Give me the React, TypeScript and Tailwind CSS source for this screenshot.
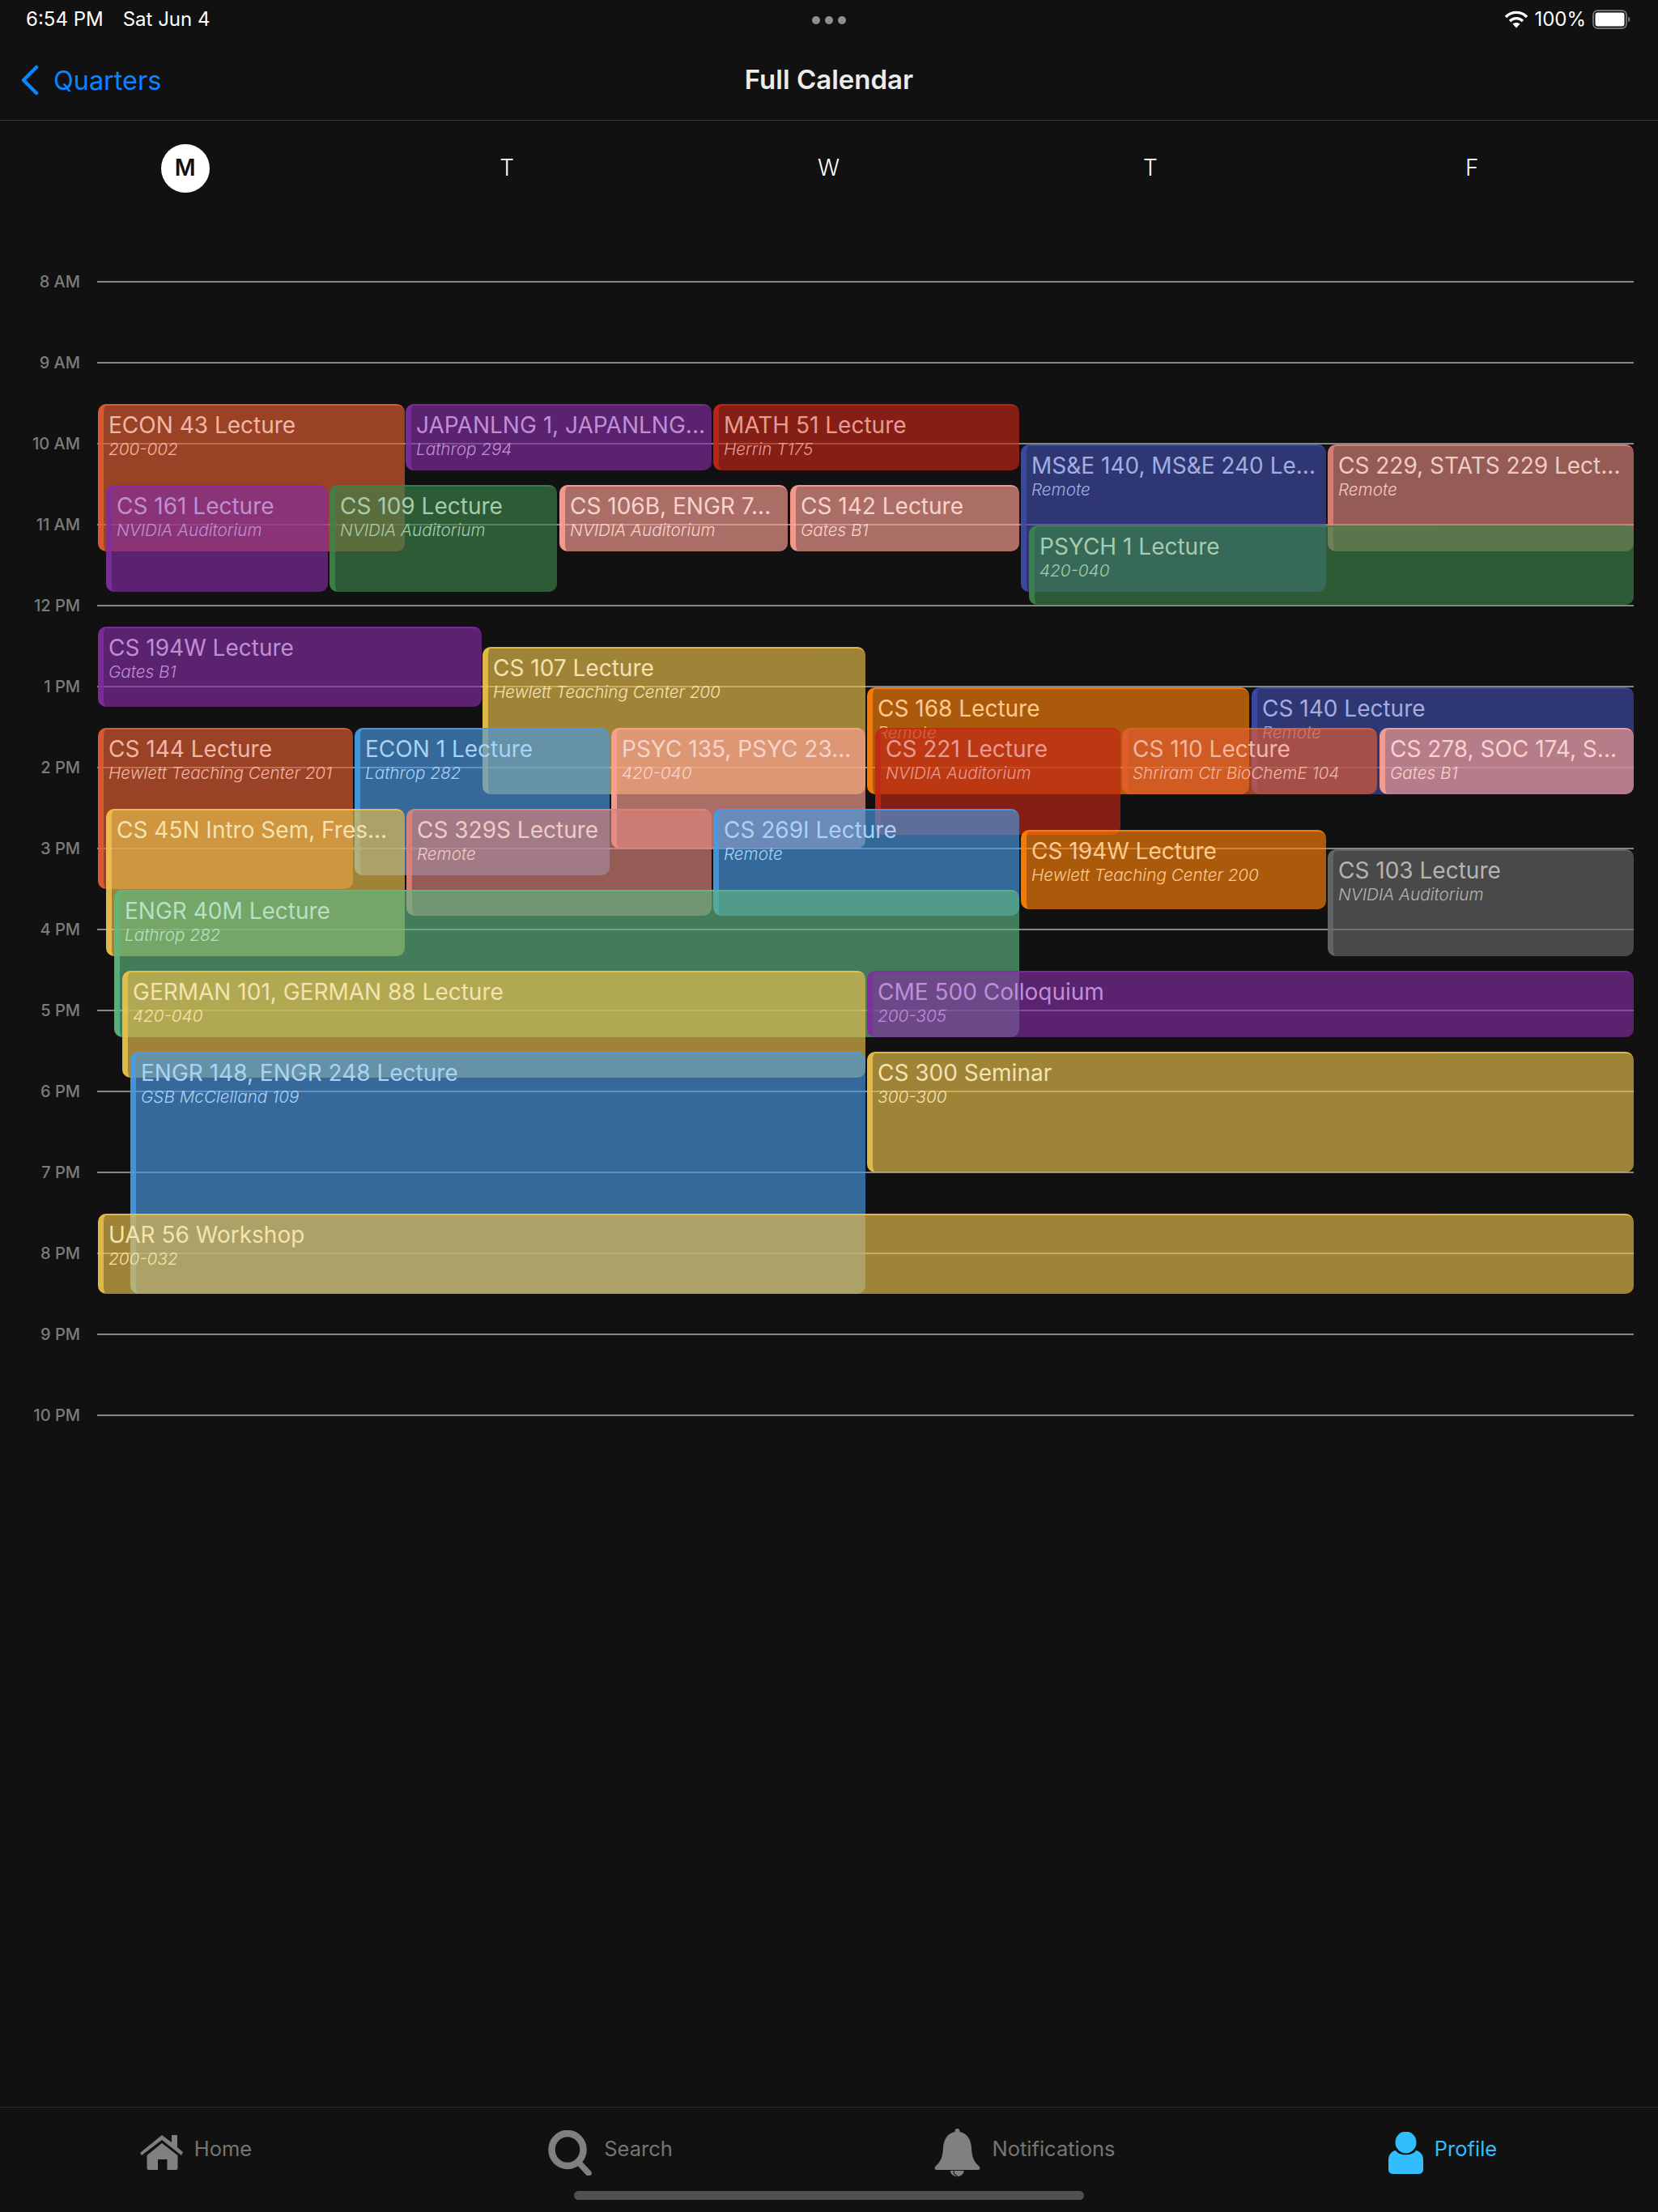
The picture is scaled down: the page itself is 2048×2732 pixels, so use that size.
import type { ReactNode } from 'react';

const tones = {
    rust: { card: 'bg-[#e45e33]/65 border-[#e45e33]/85', text: 'text-[#f2b7a3]' },
    purple: { card: 'bg-[#832da3]/65 border-[#832da3]/85', text: 'text-[#bf8fd4]' },
    red: { card: 'bg-[#c52717]/65 border-[#c52717]/85', text: 'text-[#e79c93]' },
    green: { card: 'bg-[#3c844a]/65 border-[#3c844a]/85', text: 'text-[#a6cbae]' },
    mint: { card: 'bg-[#5fb781]/65 border-[#5fb781]/85', text: 'text-[#b6e1c4]' },
    salmon: { card: 'bg-[#ffa195]/65 border-[#ffa195]/85', text: 'text-[#f8d3ce]' },
    rose: { card: 'bg-[#dd847b]/65 border-[#dd847b]/85', text: 'text-[#f0cbc6]' },
    navy: { card: 'bg-[#3f4dab]/65 border-[#3f4dab]/85', text: 'text-[#a3addf]' },
    gold: { card: 'bg-[#edc24d]/65 border-[#edc24d]/85', text: 'text-[#f4e3b0]' },
    orange: { card: 'bg-[#ff8108]/65 border-[#ff8108]/85', text: 'text-[#fdca90]' },
    blue: { card: 'bg-[#489ae4]/65 border-[#489ae4]/85', text: 'text-[#a9d2f4]' },
    gray: { card: 'bg-[#696969]/65 border-[#696969]/85', text: 'text-[#b4b4b4]' },
};

type CalendarEvent = {
    title: string;
    room?: string;
    tone: keyof typeof tones;
    x: number;
    y: number;
    w: number;
    h: number;
};

// x / y are offsets inside the calendar body, 100px = 1 hour
const events: CalendarEvent[] = [
    { title: 'ECON 43 Lecture', room: '200-002', tone: 'rust', x: 121, y: 201, w: 379, h: 182 },
    { title: 'JAPANLNG 1, JAPANLNG...', room: 'Lathrop 294', tone: 'purple', x: 501, y: 201, w: 378, h: 82 },
    { title: 'MATH 51 Lecture', room: 'Herrin T175', tone: 'red', x: 881, y: 201, w: 378, h: 82 },
    { title: 'MS&E 140, MS&E 240 Le...', room: 'Remote', tone: 'navy', x: 1261, y: 251, w: 377, h: 182 },
    { title: 'CS 229, STATS 229 Lect...', room: 'Remote', tone: 'rose', x: 1640, y: 251, w: 378, h: 132 },
    { title: 'CS 161 Lecture', room: 'NVIDIA Auditorium', tone: 'purple', x: 131, y: 301, w: 274, h: 132 },
    { title: 'CS 109 Lecture', room: 'NVIDIA Auditorium', tone: 'green', x: 407, y: 301, w: 281, h: 132 },
    { title: 'CS 106B, ENGR 7...', room: 'NVIDIA Auditorium', tone: 'salmon', x: 691, y: 301, w: 282, h: 82 },
    { title: 'CS 142 Lecture', room: 'Gates B1', tone: 'salmon', x: 976, y: 301, w: 283, h: 82 },
    { title: 'PSYCH 1 Lecture', room: '420-040', tone: 'green', x: 1271, y: 351, w: 747, h: 98 },
    { title: 'CS 194W Lecture', room: 'Gates B1', tone: 'purple', x: 121, y: 476, w: 474, h: 99 },
    { title: 'CS 107 Lecture', room: 'Hewlett Teaching Center 200', tone: 'gold', x: 596, y: 501, w: 473, h: 182 },
    { title: 'CS 168 Lecture', room: 'Remote', tone: 'orange', x: 1071, y: 551, w: 472, h: 132 },
    { title: 'CS 140 Lecture', room: 'Remote', tone: 'navy', x: 1546, y: 551, w: 472, h: 132 },
    { title: 'CS 144 Lecture', room: 'Hewlett Teaching Center 201', tone: 'rust', x: 121, y: 601, w: 315, h: 199 },
    { title: 'ECON 1 Lecture', room: 'Lathrop 282', tone: 'blue', x: 438, y: 601, w: 315, h: 182 },
    { title: 'PSYC 135, PSYC 23...', room: '420-040', tone: 'salmon', x: 755, y: 601, w: 314, h: 149 },
    { title: 'CS 221 Lecture', room: 'NVIDIA Auditorium', tone: 'red', x: 1081, y: 601, w: 303, h: 132 },
    { title: 'CS 110 Lecture', room: 'Shriram Ctr BioChemE 104', tone: 'rust', x: 1386, y: 601, w: 315, h: 82 },
    { title: 'CS 278, SOC 174, S...', room: 'Gates B1', tone: 'salmon', x: 1704, y: 601, w: 314, h: 82 },
    { title: 'CS 45N Intro Sem, Fres...', tone: 'gold', x: 131, y: 701, w: 369, h: 182 },
    { title: 'CS 329S Lecture', room: 'Remote', tone: 'rose', x: 502, y: 701, w: 377, h: 132 },
    { title: 'CS 269I Lecture', room: 'Remote', tone: 'blue', x: 881, y: 701, w: 378, h: 132 },
    { title: 'CS 194W Lecture', room: 'Hewlett Teaching Center 200', tone: 'orange', x: 1261, y: 727, w: 377, h: 98 },
    { title: 'CS 103 Lecture', room: 'NVIDIA Auditorium', tone: 'gray', x: 1640, y: 751, w: 378, h: 132 },
    { title: 'ENGR 40M Lecture', room: 'Lathrop 282', tone: 'mint', x: 141, y: 801, w: 1118, h: 182 },
    { title: 'GERMAN 101, GERMAN 88 Lecture', room: '420-040', tone: 'gold', x: 151, y: 901, w: 918, h: 132 },
    { title: 'CME 500 Colloquium', room: '200-305', tone: 'purple', x: 1071, y: 901, w: 947, h: 82 },
    { title: 'ENGR 148, ENGR 248 Lecture', room: 'GSB McClelland 109', tone: 'blue', x: 161, y: 1001, w: 908, h: 299 },
    { title: 'CS 300 Seminar', room: '300-300', tone: 'gold', x: 1071, y: 1001, w: 947, h: 149 },
    { title: 'UAR 56 Workshop', room: '200-032', tone: 'gold', x: 121, y: 1201, w: 1897, h: 99 },
];

const hours = ['8 AM', '9 AM', '10 AM', '11 AM', '12 PM', '1 PM', '2 PM', '3 PM', '4 PM', '5 PM', '6 PM', '7 PM', '8 PM', '9 PM', '10 PM'];

function EventCard({ event }: { event: CalendarEvent }) {
    const tone = tones[event.tone];
    return (
        <div
            className={`absolute overflow-hidden rounded-[10px] border-0 border-t-2 border-l-[7px] pl-[6px] pt-[7px] whitespace-nowrap ${tone.card} ${tone.text}`}
            style={{ left: event.x, top: event.y, width: event.w, height: event.h }}
        >
            <div className="text-[28px] leading-[34px]">{event.title}</div>
            {event.room && <div className="text-[20.7px] leading-[26px] italic font-light">{event.room}</div>}
        </div>
    );
}

function TabItem({ icon, label, active }: { icon: ReactNode; label: string; active?: boolean }) {
    return (
        <div className={`flex items-center justify-center gap-[14px] ${active ? 'pl-[6px] pr-[26px]' : 'pr-[28px]'}`}>
            {icon}
            <span className={`mb-[8px] text-[25.5px] ${active ? 'text-[#32bdff]' : 'text-[#757575]'}`}>{label}</span>
        </div>
    );
}

export default function App() {
    return (
        <div className="relative flex h-[2732px] w-[2048px] flex-col overflow-hidden bg-[#111111] font-['Inter',sans-serif] text-white">
            {/* status bar */}
            <div className="relative flex h-[48px] items-center justify-between pl-[32px] pr-[34px] text-[24px]">
                <div className="flex gap-[24px]">
                    <span>6:54 PM</span>
                    <span>Sat Jun 4</span>
                </div>
                <div className="absolute left-[1003px] top-[20px] flex gap-[6px]">
                    <span className="h-[10px] w-[10px] rounded-full bg-[#8e8e8e]" />
                    <span className="h-[10px] w-[10px] rounded-full bg-[#8e8e8e]" />
                    <span className="h-[10px] w-[10px] rounded-full bg-[#8e8e8e]" />
                </div>
                <div className="flex items-center gap-[8px]">
                    <svg width="28" height="22" viewBox="0 0 28 22">
                        <path d="M1 8 C8 0.5 20 0.5 27 8" fill="none" stroke="#fff" strokeWidth="3.4" />
                        <path d="M6 13 C10.5 8.5 17.5 8.5 22 13" fill="none" stroke="#fff" strokeWidth="3.4" />
                        <path d="M14 21.5 L9.5 16.5 C12 14.5 16 14.5 18.5 16.5 Z" fill="#fff" />
                    </svg>
                    <span>100%</span>
                    <svg width="47" height="24" viewBox="0 0 47 24">
                        <rect x="1" y="1" width="41" height="22" rx="5.5" fill="none" stroke="#6e6e6e" strokeWidth="2" />
                        <rect x="3.5" y="3.5" width="36" height="17" rx="3" fill="#fff" />
                        <path d="M44 8.5 C46 9.5 46.5 10.5 46.5 12 C46.5 13.5 46 14.5 44 15.5 Z" fill="#6e6e6e" />
                    </svg>
                </div>
            </div>

            {/* nav bar */}
            <div className="relative flex h-[101px] items-center justify-center border-b border-[#363636]">
                <div className="absolute left-[25px] top-[30px] flex items-center gap-[17px] text-[#0a84ff]">
                    <svg width="24" height="38" viewBox="0 0 24 38">
                        <path d="M20 3 L4 19 L20 35" fill="none" stroke="#0a84ff" strokeWidth="4.5" strokeLinecap="round" strokeLinejoin="round" />
                    </svg>
                    <span className="pt-[2px] text-[32.4px] leading-[40px]">Quarters</span>
                </div>
                <span className="pt-[2px] text-[33px] font-semibold text-[#ececec]">Full Calendar</span>
            </div>

            {/* day header */}
            <div className="grid h-[120px] grid-cols-5 pl-[30px] pr-[31px] pt-[29px] text-[28px]">
                <div className="flex justify-center">
                    <span className="flex h-[60px] w-[60px] items-center justify-center rounded-full bg-white pb-[2px] font-semibold text-[#111111]">M</span>
                </div>
                <div className="flex h-[60px] items-center justify-center pb-[2px] font-light">T</div>
                <div className="flex h-[60px] items-center justify-center pb-[2px] font-light">W</div>
                <div className="flex h-[60px] items-center justify-center pb-[2px] font-light">T</div>
                <div className="flex h-[60px] items-center justify-center pb-[2px] font-light">F</div>
            </div>

            {/* calendar body */}
            <div className="relative mt-[29px]">
                {hours.map((hour) => (
                    <div key={hour} className="flex h-[100px] items-center pr-[30px]">
                        <span className="w-[99px] text-right text-[20px] font-medium text-[#7c7c7c]">{hour}</span>
                        <div className="ml-[21px] h-[2px] flex-1 bg-[#868686]" />
                    </div>
                ))}
                {events.map((event) => (
                    <EventCard key={`${event.title}-${event.y}`} event={event} />
                ))}
            </div>

            {/* tab bar */}
            <div className="absolute inset-x-0 bottom-0 h-[130px] border-t border-[#2b2b2b]">
                <div className="grid h-[106px] grid-cols-4 pt-[5px]">
                    <TabItem
                        label="Home"
                        icon={
                            <svg width="53" height="43" viewBox="0 0 53 43">
                                <path d="M0 22 L27 0 L39 9 L39 0 L46 0 L46 15 L53 21 L51 25 L27 6 L2 25 Z" fill="#808080" />
                                <path d="M27 10 L46.5 25 L46.5 41 Q46.5 43 44.5 43 L33.5 43 L33.5 30 L22 30 L22 43 L10.5 43 Q8.5 43 8.5 41 L8.5 25 Z" fill="#808080" />
                            </svg>
                        }
                    />
                    <TabItem
                        label="Search"
                        icon={
                            <svg width="55" height="56" viewBox="0 0 55 56">
                                <ellipse cx="24" cy="24" rx="19.5" ry="20" fill="none" stroke="#808080" strokeWidth="8.5" />
                                <path d="M38 40 L50 53" fill="none" stroke="#808080" strokeWidth="7.5" strokeLinecap="round" />
                            </svg>
                        }
                    />
                    <TabItem
                        label="Notifications"
                        icon={
                            <svg width="57" height="60" viewBox="0 0 57 60">
                                <path d="M28.5 0 C31 0 31.5 2 31.5 4 C41 6 45.5 14 46 24 C46.5 36 50 42 55 46 C57 48 57 51 54 51 L3 51 C0 51 0 48 2 46 C7 42 10.5 36 11 24 C11.5 14 16 6 25.5 4 C25.5 2 26 0 28.5 0 Z" fill="#808080" />
                                <path d="M20 52 L36.5 52 C36.5 61.5 20 61.5 20 52 Z" fill="#808080" />
                                <path d="M24 52.5 C24 55.5 26 58 29 58.5" fill="none" stroke="#111111" strokeWidth="1.2" />
                            </svg>
                        }
                    />
                    <TabItem
                        active
                        label="Profile"
                        icon={
                            <svg width="43" height="52" viewBox="0 0 43 52">
                                <ellipse cx="21.5" cy="13" rx="13" ry="13.5" fill="#32bdff" />
                                <path d="M9 23 C13 30 30 30 34 23 C40 24 43 29 43 35 L43 47 C43 50 40 52 37 52 L6 52 C3 52 0 50 0 47 L0 35 C0 29 3 24 9 23 Z" fill="#32bdff" />
                            </svg>
                        }
                    />
                </div>
                <div className="absolute bottom-[15px] left-[709px] h-[11px] w-[630px] rounded-full bg-[#505050]" />
            </div>
        </div>
    );
}
